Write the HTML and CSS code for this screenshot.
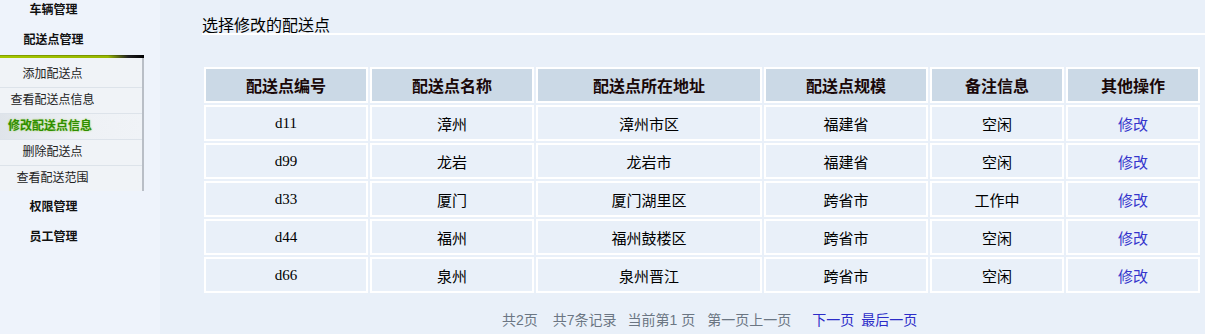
FILE: index.html
```html
<!DOCTYPE html>
<html lang="zh-CN">
<head>
  <meta charset="UTF-8">
  <title>配送点管理</title>
  <link rel="stylesheet" href="styles.css">
</head>
<body>
  <div class="sidebar">
    <div class="menu-title">车辆管理</div>
    <div class="menu-title">配送点管理</div>
    <div class="submenu">
      <div class="sub-item">添加配送点</div>
      <div class="sub-item">查看配送点信息</div>
      <div class="sub-item active">修改配送点信息</div>
      <div class="sub-item">删除配送点</div>
      <div class="sub-item">查看配送范围</div>
    </div>
    <div class="menu-title">权限管理</div>
    <div class="menu-title">员工管理</div>
  </div>

  <div class="main">
    <div class="page-title">选择修改的配送点</div>

    <table class="list">
      <thead>
        <tr>
          <th class="c1">配送点编号</th><th class="c2">配送点名称</th><th class="c3">配送点所在地址</th>
          <th class="c4">配送点规模</th><th class="c5">备注信息</th><th class="c6">其他操作</th>
        </tr>
      </thead>
      <tbody>
        <tr><td>d11</td><td>漳州</td><td>漳州市区</td><td>福建省</td><td>空闲</td><td><a href="#">修改</a></td></tr>
        <tr><td>d99</td><td>龙岩</td><td>龙岩市</td><td>福建省</td><td>空闲</td><td><a href="#">修改</a></td></tr>
        <tr><td>d33</td><td>厦门</td><td>厦门湖里区</td><td>跨省市</td><td>工作中</td><td><a href="#">修改</a></td></tr>
        <tr><td>d44</td><td>福州</td><td>福州鼓楼区</td><td>跨省市</td><td>空闲</td><td><a href="#">修改</a></td></tr>
        <tr><td>d66</td><td>泉州</td><td>泉州晋江</td><td>跨省市</td><td>空闲</td><td><a href="#">修改</a></td></tr>
      </tbody>
    </table>

    <div class="pager">
      <span class="p1">共2页</span>
      <span class="p2">共7条记录</span>
      <span class="p3">当前第1 页</span>
      <span class="p4">第一页上一页</span>
      <a class="p5" href="#">下一页</a>
      <a class="p6" href="#">最后一页</a>
    </div>
  </div>
</body>
</html>
```

FILE: styles.css
```css
body {
  margin: 0;
  display: flex;
  min-height: 100vh;
  background-color: #e9f0f9;
  font-family: "Liberation Sans", "Noto Sans CJK SC", sans-serif;
  color: #000;
}

.sidebar {
  width: 160px;
  flex-shrink: 0;
  background-color: #eef3fb;
}
.menu-title {
  width: 107px;
  height: 20px;
  line-height: 20px;
  margin-bottom: 10px;
  text-align: center;
  font-size: 12px;
  font-weight: bold;
  color: #111;
}
.menu-title:nth-child(2) { margin-bottom: 5px; }
.submenu {
  width: 142px;
  margin-bottom: 6px;
  border-right: 2px solid #b9bec6;
  background-color: #f0f3f7;
}
.submenu::before {
  content: "";
  display: block;
  height: 3px;
  margin-right: -2px;
  margin-bottom: 4px;
  background: linear-gradient(to bottom, rgba(0,0,0,0.35) 0, rgba(0,0,0,0) 40%),
              linear-gradient(to right, #a6c800 0, #98b800 75%, #222 89%, #000 100%);
}
.sub-item {
  height: 25px;
  line-height: 25px;
  padding-right: 37px;
  text-align: center;
  font-size: 12px;
  color: #222;
  border-bottom: 1px solid #dde3ea;
}
.sub-item:last-child { border-bottom: none; }
.sub-item.active {
  text-align: left;
  padding-left: 8px;
  padding-right: 0;
  font-weight: bold;
  color: #2f8f00;
  text-shadow: 0 0 2px #a6d060;
  background: linear-gradient(to right, #dfe4ea 0, #eef1f5 60%, #f0f3f7 100%);
}

.main {
  flex: 1;
  padding-left: 42px;
}
.page-title {
  margin-top: 18px;
  font-size: 16px;
  line-height: 15px;
  border-bottom: 2px solid #fff;
}

.list {
  margin-top: 30px;
  width: 1000px;
  table-layout: fixed;
  border-collapse: separate;
  border-spacing: 2px;
}
.list th, .list td {
  height: 32px;
  padding: 0;
  border: 2px solid #fff;
  text-align: center;
}
.list th {
  background-color: #cbd9e6;
  font-size: 16px;
  font-weight: bold;
  color: #1a0808;
}
.list td {
  background-color: #e9f0f9;
  font-size: 15px;
  font-family: "Liberation Serif", "Noto Sans CJK SC", serif;
}
.list .c1, .list .c2, .list .c4 { width: 160px; }
.list .c3 { width: 222px; }
.list .c5, .list .c6 { width: 130px; }
.list a {
  color: #3535cc;
  text-decoration: none;
}

.pager {
  display: flex;
  margin-top: 17px;
  font-size: 14px;
  line-height: 16px;
  color: #6b7683;
  white-space: pre;
}
.pager .p1 { margin-left: 300px; }
.pager .p2 { margin-left: 15px; }
.pager .p3 { margin-left: 11px; }
.pager .p4 { margin-left: 12px; }
.pager a {
  color: #2c2cc8;
  text-decoration: none;
}
.pager .p5 { margin-left: 21px; }
.pager .p6 { margin-left: 7px; }
```
